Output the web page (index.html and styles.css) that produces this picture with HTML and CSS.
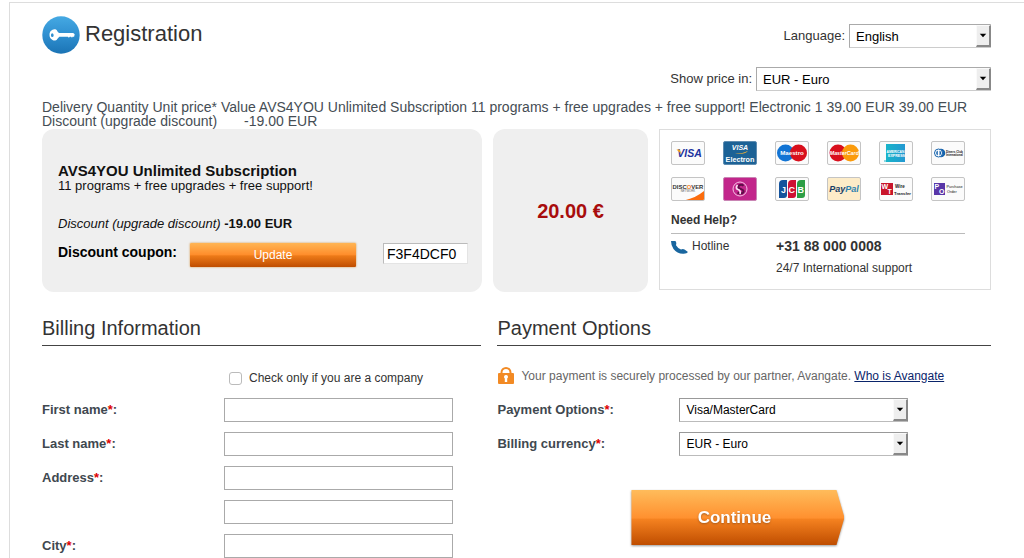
FILE: index.html
```html
<!DOCTYPE html>
<html lang="en">
<head>
<meta charset="utf-8">
<title>Registration</title>
<link rel="stylesheet" href="styles.css">
</head>
<body>
<main class="page">
  <header class="top">
    <div class="title">
      <svg class="title-icon" width="38" height="38" viewBox="0 0 38 38" aria-hidden="true">
        <defs><linearGradient id="disc" x1="0" y1="0" x2="0" y2="1"><stop offset="0" stop-color="#45a9e3"/><stop offset=".5" stop-color="#2f8fd0"/><stop offset="1" stop-color="#1b74b5"/></linearGradient></defs>
        <circle cx="19" cy="19" r="18.7" fill="url(#disc)"/>
        <path fill="#fff" fill-rule="evenodd" d="M7.500 19a5.500 5.500 0 0 1 3-5.200 3.300 3.300 0 0 1 5 1.600l1.500 1.600h14.200l1.500 1.200-.6 2.500h-1.500l-.6 1-.9-1h-1.300l-.9 1-1-1h-8.600l-1.800 2a3.300 3.300 0 0 1-5 1.200 5.500 5.500 0 0 1-3-4.900zm2.900-1.700a1.500 1.900 0 1 0 .1 3.800 2.100 2.100 0 0 0-.1-3.800z"/>
      </svg>
      <h1>Registration</h1>
    </div>
    <div class="prefs">
      <div class="pref"><label for="language">Language:</label>
        <span class="select select-lang"><select id="language"><option>English</option></select><svg class="arrow" viewBox="0 0 13 20" aria-hidden="true"><path d="M3 8h7l-3.500 4z"/></svg></span></div>
      <div class="pref"><label for="price-in">Show price in:</label>
        <span class="select select-price"><select id="price-in"><option>EUR - Euro</option></select><svg class="arrow" viewBox="0 0 13 20" aria-hidden="true"><path d="M3 8h7l-3.500 4z"/></svg></span></div>
    </div>
  </header>

  <p class="order">Delivery Quantity Unit price* Value AVS4YOU Unlimited Subscription 11 programs + free upgrades + free support! Electronic 1 39.00 EUR 39.00 EUR<br>Discount (upgrade discount)<span class="order-amount">-19.00 EUR</span></p>

  <section class="summary">
    <div class="panel product">
      <h2>AVS4YOU Unlimited Subscription</h2>
      <p class="product-note">11 programs + free upgrades + free support!</p>
      <p class="product-discount"><em>Discount (upgrade discount)</em> <strong>-19.00 EUR</strong></p>
      <div class="coupon">
        <label for="coupon">Discount coupon:</label>
        <button class="update" type="button">Update</button>
        <input id="coupon" class="coupon-code" type="text" value="F3F4DCF0">
      </div>
    </div>
    <div class="panel price">20.00 €</div>
    <aside class="help">
      <div class="cards">
        <svg class="card" viewBox="1 1 32 22"><text x="18.500" y="16" text-anchor="middle" font-size="10.500" font-weight="700" font-style="italic" fill="#1d33a0">VISA</text><path d="M5.500 8.500h3.200l1.500 4.500z" fill="#f0a41c"/></svg>
        <svg class="card electron" viewBox="1 1 32 22"><text x="17" y="9" text-anchor="middle" font-size="7" font-weight="700" font-style="italic" fill="#fff">VISA</text><path d="M12 12.800q8 0 13-3-3 4-13 3z" fill="#f2b134"/><text x="17" y="20.500" text-anchor="middle" font-size="7.200" font-weight="700" fill="#fff">Electron</text></svg>
        <svg class="card" viewBox="1 1 32 22"><circle cx="10.500" cy="12" r="8.500" fill="#1274d4"/><circle cx="23.500" cy="12" r="8.500" fill="#d80f1c"/><text x="17" y="14.300" text-anchor="middle" font-size="6.200" font-weight="700" fill="#fff">Maestro</text></svg>
        <svg class="card" viewBox="1 1 32 22"><circle cx="11" cy="12" r="8.500" fill="#d90f1c"/><circle cx="23.500" cy="12" r="8.500" fill="#fb9b0b"/><text x="17.300" y="14" text-anchor="middle" font-size="5.300" font-weight="700" font-style="italic" fill="#fff">MasterCard</text></svg>
        <svg class="card" viewBox="1 1 32 22"><defs><linearGradient id="amex"><stop offset="0" stop-color="#19b5c9"/><stop offset="1" stop-color="#2398d2"/></linearGradient></defs><rect x="7" y="3" width="19" height="18" fill="url(#amex)"/><text x="16.500" y="11.500" text-anchor="middle" font-size="3.300" font-weight="700" fill="#fff">AMERICAN</text><text x="17.500" y="15.500" text-anchor="middle" font-size="3.600" font-weight="700" fill="#fff">EXPRESS</text><path d="M5 20h2" stroke="#19b5c9"/></svg>
        <svg class="card" viewBox="1 1 32 22"><circle cx="10" cy="12" r="4.300" fill="#1663ad"/><circle cx="7.500" cy="12" r="4" fill="#fff" stroke="#1663ad"/><path d="M6.800 9.500a2.700 2.700 0 0 0 0 5zM8.500 9.500a2.700 2.700 0 0 1 0 5z" fill="#1663ad"/><text x="15" y="11.800" font-size="3" font-weight="700" fill="#111">Diners Club</text><text x="15" y="15" font-size="2.800" font-weight="700" fill="#111">International</text></svg>
        <svg class="card" viewBox="1 1 32 22"><path d="M8 24q14-1 25-10v10z" fill="#fb6c0d"/><text x="17" y="11.500" text-anchor="middle" font-size="5.900" font-weight="700" fill="#333">DISC<tspan fill="#f5811f">O</tspan>VER</text><text x="17" y="15" text-anchor="middle" font-size="2.800" fill="#555">NETWORK</text></svg>
        <svg class="card solo" viewBox="1 1 32 22"><g fill="none" stroke="#f6c3e6"><circle cx="17" cy="12" r="7"/></g><path d="M20.500 8.800c-2-2-6-.8-5 1.800.5 1.300 4.500 1.300 5 3.200.6 2.500-3.300 3.600-6 1.700" fill="none" stroke="#5e0c47" stroke-width="2"/><path d="M14.500 8q-2.500 3.500.5 4.500 3 1 2 4.500" fill="none" stroke="#f9e1f2" stroke-width="1.700"/></svg>
        <svg class="card" viewBox="1 1 32 22"><path d="M8 3h4v15q0 3-3 3H4V7q0-4 4-4z" fill="#14539c"/><path d="M17 3h4v15q0 3-3 3h-5V7q0-4 4-4z" fill="#cf1235"/><path d="M26 3h4v15q0 3-3 3h-5V7q0-4 4-4z" fill="#2c9e45"/><text y="15.500" font-size="9" font-weight="700" fill="#fff"><tspan x="6">J</tspan><tspan x="13.500">C</tspan><tspan x="22.500">B</tspan></text></svg>
        <svg class="card paypal" viewBox="1 1 32 22"><text x="17" y="15" text-anchor="middle" font-size="9" font-weight="700" font-style="italic" fill="#1b3e66">Pay<tspan fill="#2f83b0">Pal</tspan></text></svg>
        <svg class="card" viewBox="1 1 32 22"><rect x="2" y="6" width="12" height="12" fill="#c9152b"/><text x="2.500" y="12" font-size="7" font-weight="700" fill="#fff">W</text><text x="8.500" y="17.300" font-size="7" font-weight="700" fill="#fff">T</text><text x="16" y="11.300" font-size="4.500" font-weight="700" fill="#222">Wire</text><text x="15" y="17.500" font-size="4.300" font-weight="700" fill="#222">Transfer</text></svg>
        <svg class="card" viewBox="1 1 32 22"><rect x="3" y="6" width="11" height="12" fill="#5836a8"/><text x="3.500" y="12" font-size="7" font-weight="700" fill="#fff">P</text><text x="8" y="17" font-size="7" font-weight="700" fill="#fff">O</text><text x="15.500" y="11" font-size="3.800" fill="#111">Purchase</text><text x="16" y="16.300" font-size="3.800" fill="#111">Order</text></svg>
      </div>
      <h3>Need Help?</h3>
      <div class="hotline">
        <svg class="phone" width="17" height="13" viewBox="0 0 17 13" aria-hidden="true"><path fill="#19669f" d="M0 0h4.500q1.500 2 .5 4.200Q6.500 7 10 8.500q2-.8 3.500 0l3.500 2.500Q16 13 12 12.800 6 12.600 2.500 8 0 4.500 0 0z"/></svg>
        <span class="hotline-name">Hotline</span>
        <strong>+31 88 000 0008</strong>
        <span class="hours">24/7 International support</span>
      </div>
    </aside>
  </section>

  <form class="forms">
    <section class="billing">
      <h2 class="section-title">Billing Information</h2>
      <div class="company"><input id="company" type="checkbox"><label for="company">Check only if you are a company</label></div>
      <div class="fields">
        <label for="first">First name<b>*</b>:</label><input id="first" type="text">
        <label for="last">Last name<b>*</b>:</label><input id="last" type="text">
        <label for="address">Address<b>*</b>:</label><input id="address" type="text">
        <input class="address-more" aria-label="Address line 2" type="text">
        <label for="city">City<b>*</b>:</label><input id="city" type="text">
      </div>
    </section>
    <section class="payment">
      <h2 class="section-title">Payment Options</h2>
      <p class="secure">
        <svg width="16" height="17" viewBox="0 0 16 17" aria-hidden="true"><path d="M3.500 7V5.500a4.500 4.500 0 0 1 9 0V7" fill="none" stroke="#f28a24" stroke-width="2"/><rect y="6" width="16" height="11" rx="1" fill="#f28a24"/><path d="M8 8a2 2 0 0 1 1.200 3.600V15H6.800v-3.400A2 2 0 0 1 8 8z" fill="#fff"/></svg>
        <span>Your payment is securely processed by our partner, Avangate. <a href="#">Who is Avangate</a></span>
      </p>
      <div class="fields">
        <label for="method">Payment Options<b>*</b>:</label>
        <span class="select select-form"><select id="method"><option>Visa/MasterCard</option></select><svg class="arrow" viewBox="0 0 13 20" aria-hidden="true"><path d="M3 8h7l-3.500 4z"/></svg></span>
        <label for="currency">Billing currency<b>*</b>:</label>
        <span class="select select-form"><select id="currency"><option>EUR - Euro</option></select><svg class="arrow" viewBox="0 0 13 20" aria-hidden="true"><path d="M3 8h7l-3.500 4z"/></svg></span>
      </div>
      <button class="continue" type="button"><span>Continue</span></button>
    </section>
  </form>
</main>
</body>
</html>
```
FILE: styles.css
```css
* { box-sizing: border-box; }
body {
  margin: 0;
  background: #fff;
  color: #333;
  font: 12px/14px "Liberation Sans", Arial, sans-serif;
}
h1, h2, h3, p { margin: 0; }
input, select, button { font-family: inherit; margin: 0; }

.page {
  margin: 2px 0 0 9px;
  padding: 13px 33px 0 32px;
  border: solid #ddd;
  border-width: 1px 0 0 1px;
}

.top { display: flex; justify-content: space-between; }
.title { display: flex; gap: 5px; }
.title-icon { display: block; }
h1 { font-size: 22px; line-height: 36px; font-weight: 400; }
.prefs { display: grid; gap: 19px; justify-items: end; padding-top: 8px; }
.pref { display: flex; align-items: center; gap: 4px; font-size: 13px; }

.select { display: grid; grid-template-columns: 1fr 15px; height: 24px; }
.select select {
  grid-area: 1 / 1 / 2 / 3;
  width: 100%;
  height: 100%;
  padding: 0 18px 0 6px;
  border: 1px solid #ccc;
  border-top-color: #aaa;
  border-left-color: #aaa;
  border-radius: 0;
  background: #fff;
  color: #000;
  font-size: 13px;
  appearance: none;
}
.select-lang { width: 142px; }
.select-price { width: 235px; }
.select-form select { font-size: 12px; border-color: #999 #aaa #bbb #999; }
.arrow {
  grid-area: 1 / 2;
  z-index: 1;
  width: 15px;
  height: 22px;
  align-self: center;
  background: #eee;
  border: 2px solid;
  border-color: #fafafa #888 #888 #fafafa;
  border-width: 1px 2px 2px 1px;
  pointer-events: none;
}

.order { margin-top: 9px; color: #454d54; font-size: 14px; line-height: 14px; }
.order-amount { margin-left: 27px; }

.summary { display: grid; grid-template-columns: 440fr 155fr 332fr; gap: 11px; margin-top: 1px; }
.panel { background: #efefef; border-radius: 12px; }
.product { padding: 34px 14px 25px 16px; color: #111; font-size: 13px; }
.product h2 { font-size: 15px; line-height: 16px; color: #111; }
.product-discount { margin-top: 24px; }
.coupon { display: flex; align-items: flex-start; margin-top: 12px; }
.coupon label { width: 132px; font-size: 14px; line-height: 18px; font-weight: 700; color: #000; }
.update {
  width: 166px;
  height: 24px;
  padding: 0;
  border: 0;
  border-radius: 1px;
  background: linear-gradient(#ffb554, #ff8e2c 48%, #ed7a18 54%, #bf4d00);
  box-shadow: 0 0 2px #d08a30;
  color: #fff;
  font-size: 12px;
}
.coupon-code {
  width: 85px;
  height: 21px;
  margin-left: auto;
  padding: 0 3px;
  border: 1px solid #e4e4e4;
  border-top-color: #bbb;
  border-left-color: #bbb;
  font-size: 14px;
}
.price { display: grid; place-items: center; color: #a80c0c; font-size: 20px; font-weight: 700; }

.help { padding: 11px 25px 14px 11px; border: 1px solid #ddd; margin-bottom: 2px; }
.cards { display: grid; grid-template-columns: repeat(6, 34px); justify-content: space-between; row-gap: 12px; }
.card {
  width: 34px;
  height: 24px;
  border: 1px solid #c4c4c4;
  border-radius: 2px;
  background: #fbfbfb;
}
.electron { background: #1c6296; border-color: #5e8cb0; }
.solo { background: #c2268b; border-color: #c985b4; }
.paypal { background: #fdecc8; }
.help h3 {
  margin-top: 12px;
  padding-bottom: 6px;
  border-bottom: 1px solid #bbb;
  font-size: 12px;
  line-height: 14px;
}
.hotline {
  display: grid;
  grid-template-columns: 17px 80px 1fr;
  gap: 7px 4px;
  padding-top: 5px;
}
.phone { margin-top: 2px; }
.hotline strong { font-size: 14px; }
.hours { grid-column: 3; }

.forms { display: grid; grid-template-columns: 439fr 493fr; gap: 16px; margin-top: 25px; }
.section-title {
  padding-bottom: 5px;
  border-bottom: 1px solid #444;
  font-size: 20px;
  line-height: 23px;
  font-weight: 400;
}
.company { display: flex; align-items: center; gap: 7px; height: 14px; margin: 25px 0 13px 187px; }
.company input {
  width: 13px;
  height: 13px;
  border: 1px solid #bbb;
  border-radius: 3px;
  background: #fff;
  appearance: none;
}
.fields { display: grid; grid-template-columns: 182px minmax(0, 229px); row-gap: 10px; }
.fields label { color: #40484f; font-size: 13px; line-height: 24px; font-weight: 700; }
.fields label b { color: #d00; }
.fields input { width: 100%; height: 24px; border: 1px solid #aaa; background: #fff; }
.address-more { grid-column: 2; }
.secure { display: flex; align-items: center; gap: 7px; height: 17px; margin: 21px 0 14px; padding-left: 1px; color: #666; }
.secure a { color: #0a246a; }
.continue {
  display: block;
  width: 213px;
  height: 55px;
  margin: 34px 0 12px 134px;
  padding: 0;
  border: 0;
  background: none;
  color: #fff;
  font-size: 17px;
  font-weight: 700;
  filter: drop-shadow(0 1px 1px #999);
}
.continue span {
  display: block;
  padding-right: 7px;
  line-height: 55px;
  background: linear-gradient(#ffbc5b, #ff902f 51%, #f58220 53%, #bf4d00);
  clip-path: polygon(0 0, 205px 0, 100% 50%, 205px 100%, 0 100%);
  text-shadow: 0 1px 2px #a75a1c;
}
```
